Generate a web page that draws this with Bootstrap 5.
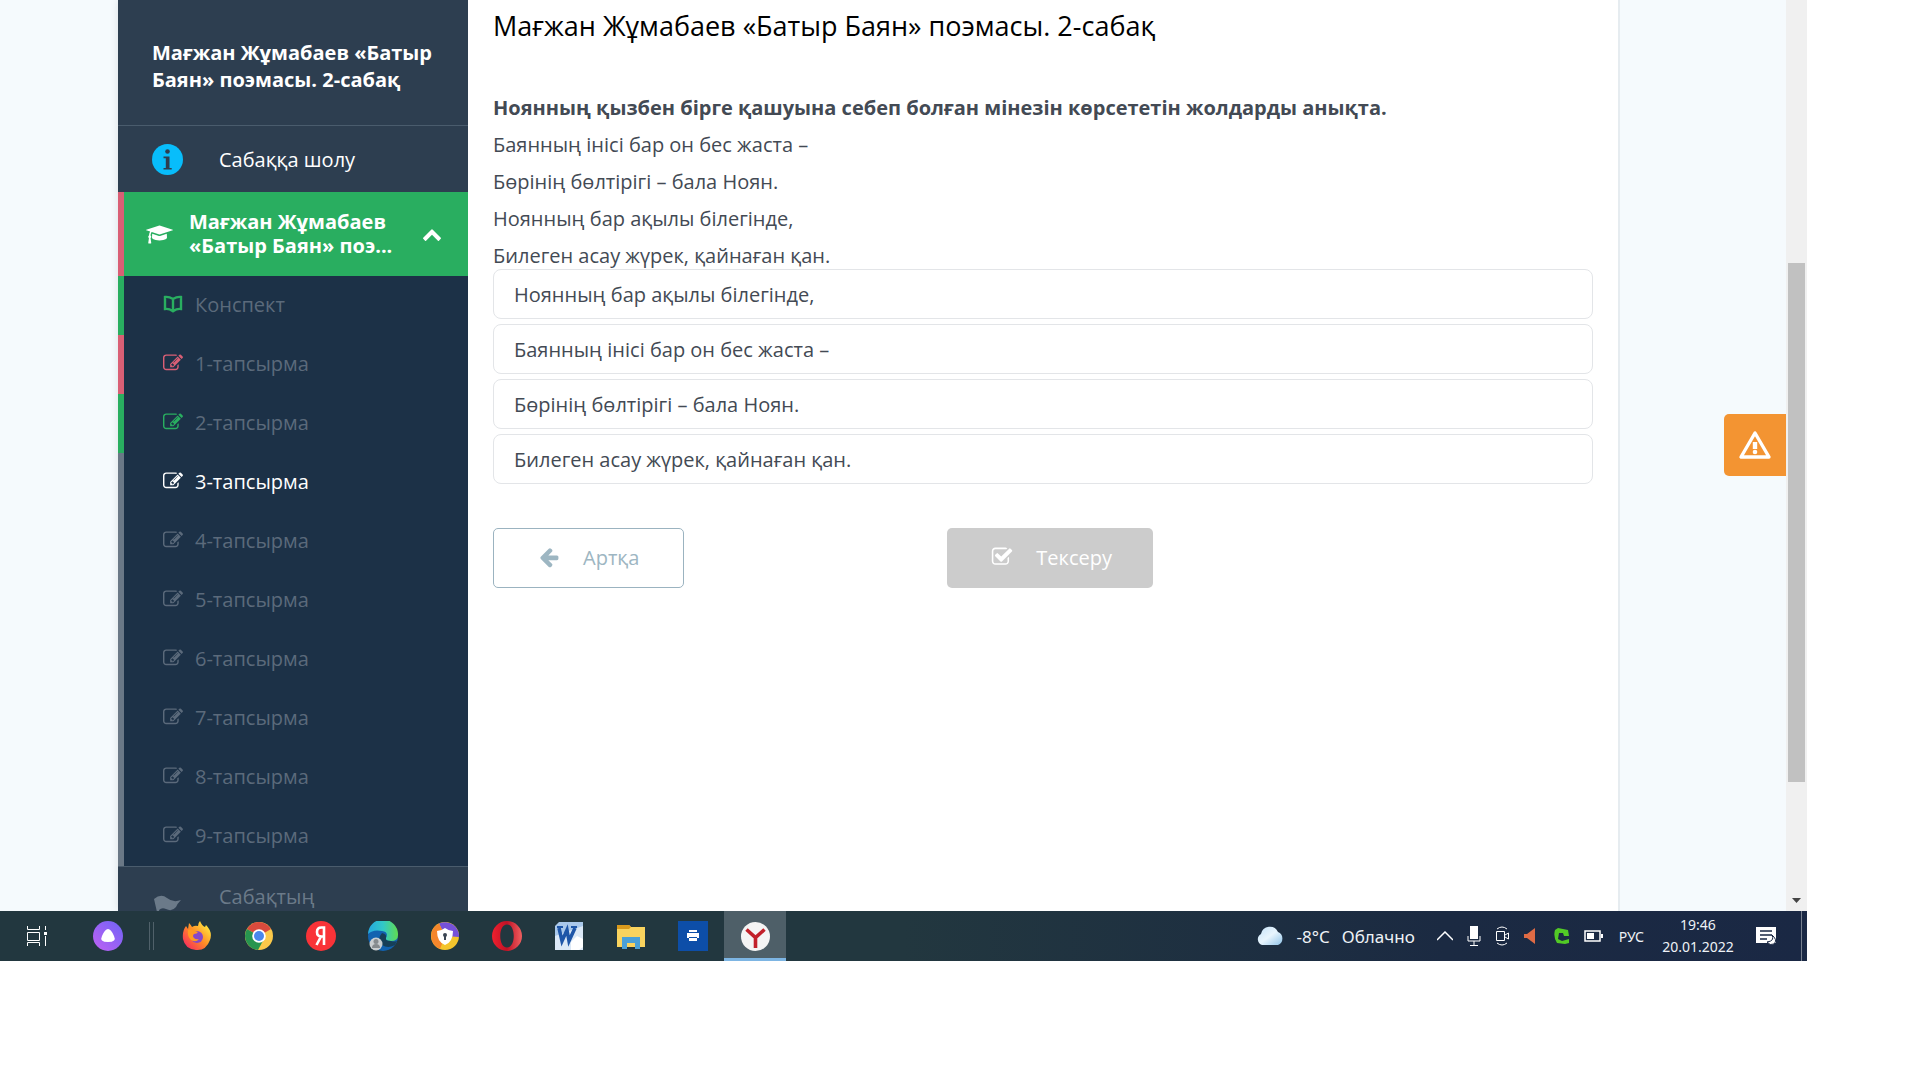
<!DOCTYPE html>
<html lang="kk">
<head>
<meta charset="utf-8">
<meta name="viewport" content="width=device-width, initial-scale=1">
<title>Мағжан Жұмабаев «Батыр Баян» поэмасы. 2-сабақ</title>
<link href="https://cdn.jsdelivr.net/npm/bootstrap@5.3.0/dist/css/bootstrap.min.css" rel="stylesheet">
<style>
:root { --ok: #29ae60; --bad: #d95f75; --idle: #6a7886; --muted: #5b6a7b; }
body { font-family: "Open Sans", "Noto Sans", sans-serif; font-size: 20px; line-height: 27px; color: #434a54; background: #fff; }
a { text-decoration: none; }
button { font: inherit; }
svg { display: block; flex: none; fill: currentColor; }
.desktop { height: calc(100vh - 119px); margin-right: 113px; }
.viewport { background: #f5fafd; min-height: 0; }
.gutter-start { width: 118px; }
.gutter-end { width: 168px; border-left: 2px solid #e6ecf0; }
.lesson-nav { width: 350px; background: #2d3e50; color: #fff; box-shadow: 0 0 8px rgba(0,0,0,.1); }
.lesson-nav a { color: inherit; }
.nav-title { padding: 39px 28px 32px 34px; font-size: 20px; line-height: 27px; }
.nav-line { border-top: 1px solid #4a5c6d; }
.nav-overview { height: 67px; padding-left: 34px; gap: 36px; }
.topic { height: 84px; border: 0; border-left: 6px solid var(--bad); background: var(--ok); color: #fff; line-height: 24px; padding: 0 26px 0 22px; gap: 16px; }
.step-link { height: 59px; padding: 0 0 3px 39px; gap: 12px; border-left: 6px solid var(--idle); background: #1c3147; }
.lesson-nav .step-link { color: var(--muted); }
.step-link.done { border-color: var(--ok); }
.step-link.failed { border-color: var(--bad); }
.done svg { color: var(--ok); }
.failed svg { color: var(--bad); }
.lesson-nav .step-link.current { color: #fff; }
.nav-summary { padding: 16px 0 0 36px; gap: 38px; }
.lesson-nav .nav-summary { color: #6b7a89; }
.summary-label { min-height: 54px; }
.lesson { padding: 8px 25px 0; background: #fff; }
.lesson h1 { font-size: 27px; line-height: 36px; color: #000; margin-bottom: 50px; font-weight: 400; }
.lesson p { margin-bottom: 10px; }
.lesson p:last-of-type { margin-bottom: 0; }
.answers { gap: 5px; margin-bottom: 44px; }
.answer { height: 50px; padding: 0 20px; border: 1px solid #e3e5e8; border-radius: 8px; background: #fff; color: #434a54; }
.act { height: 60px; border-radius: 5px; gap: 23px; padding: 0 44px 2px; }
.act-back { border: 1px solid #9bb3c0; background: #fff; color: #9db6c2; }
.act-check { border: 0; background: #ccc; color: #fff; padding-right: 41px; }
.act-row { gap: 263px; }
.report { top: 414px; right: 0; width: 62px; height: 62px; border: 0; border-radius: 5px 0 0 5px; background: #f39432; color: #fff; }
.scroller { width: 21px; background: #f0f0f0; padding: 263px 2px 8px; }
.scroll-thumb { flex: 0 1 519px; background: #c1c1c1; }
.taskbar { height: 50px; flex: none; background: linear-gradient(90deg, #22373f 0, #22373f 50%, #1b2a42 80%, #1a2844 100%); color: #eef2f6; font-family: "Noto Sans", "Open Sans", sans-serif; }
.taskbar button { border: 0; background: none; color: inherit; padding: 0; height: 50px; display: flex; align-items: center; justify-content: center; }
.tb-app { width: 62px; }
.tb-view { width: 73px; }
.tb-alice { width: 69px; }
.tb-grip { width: 5px; height: 28px; margin: 0 12px 0 7px; border: solid #50616a; border-width: 0 1px; }
.taskbar .tb-active { background: #4e5f68; border-bottom: 3px solid #7db5e3; padding-top: 3px; }
.taskbar .weather { font-size: 17px; gap: 12px; }
.tray { gap: 16px; padding-left: 22px; font-size: 14px; }
.status-icons { gap: 14px; }
.clock { width: 72px; margin-left: 2px; font-size: 14px; line-height: 22px; text-align: center; }
.taskbar .tb-note { margin-left: 6px; }
.tb-edge { width: 6px; margin-left: 9px; border-left: 1px solid #77808f; }
</style>
<script src="https://cdn.jsdelivr.net/npm/bootstrap@5.3.0/dist/js/bootstrap.bundle.min.js"></script>
</head>
<body>
<svg width="0" height="0" class="position-absolute" aria-hidden="true">
  <symbol id="edit" viewBox="0 0 1792 1792"><path d="M888 1184l116-116-152-152-116 116v56h96v96h56zm440-720q-16-16-33 1l-350 350q-17 17-1 33t33-1l350-350q17-17 1-33zm80 594v190q0 119-84.5 203.5t-203.5 84.5h-832q-119 0-203.5-84.5t-84.5-203.5v-832q0-119 84.5-203.5t203.5-84.5h832q63 0 117 25 15 7 18 23 3 17-9 29l-49 49q-14 14-32 8-23-6-45-6h-832q-66 0-113 47t-47 113v832q0 66 47 113t113 47h832q66 0 113-47t47-113v-126q0-13 9-22l64-64q15-15 35-7t20 29zm-96-738l288 288-672 672h-288v-288zm444 132l-92 92-288-288 92-92q28-28 68-28t68 28l152 152q28 28 28 68t-28 68z"/></symbol>
</svg>
<div class="desktop d-flex flex-column">
  <div class="viewport d-flex flex-grow-1 overflow-hidden position-relative">
    <div class="gutter-start flex-shrink-0"></div>
    <nav class="lesson-nav flex-shrink-0">
      <h2 class="nav-title fw-bold mb-0">Мағжан Жұмабаев «Батыр Баян» поэмасы. 2-сабақ</h2>
      <a href="#" class="nav-overview nav-line d-flex align-items-center">
        <svg width="31" height="31" viewBox="0 0 31 31"><circle cx="15.500" cy="15.500" r="15.500" fill="#08bdfb"/><g fill="#2d3e50"><circle cx="15.500" cy="7.500" r="2.300"/><path d="M11.500 12.500h6V24h2.200v1.500h-8.200V24h2.300v-9.800h-2.300z"/></g></svg>
        <span>Сабаққа шолу</span>
      </a>
      <button type="button" class="topic d-flex align-items-center w-100 text-start fw-bold">
        <svg width="27" height="21" viewBox="0 0 2304 1792"><path d="M1774 836l18 316q4 69-82 128t-235 93.500-323 34.500-323-34.500-235-93.500-82-128l18-316 574 181q22 7 48 7t48-7zm530-324q0 23-22 31l-1120 352q-4 1-10 1t-10-1l-652-206q-43 34-71 111.500t-34 178.500q63 36 63 109 0 69-58 107l58 433q2 14-8 25-9 11-24 11h-192q-15 0-24-11-10-11-8-25l58-433q-58-38-58-107 0-73 65-111 11-207 98-330l-333-104q-22-8-22-31t22-31l1120-352q4-1 10-1t10 1l1120 352q22 8 22 31z"/></svg>
        <span class="flex-grow-1">Мағжан Жұмабаев «Батыр Баян» поэ...</span>
        <svg width="20" height="20" viewBox="0 0 1792 1792"><path d="M1683 1331l-166 165q-19 19-45 19t-45-19l-531-531-531 531q-19 19-45 19t-45-19l-166-165q-19-19-19-45.500t19-45.500l742-741q19-19 45-19t45 19l742 741q19 19 19 45.500t-19 45.500z"/></svg>
      </button>
      <a href="#" class="step-link done d-flex align-items-center"><svg width="20" height="18" viewBox="0 0 20 18"><path d="M10 4Q6 1.500 2 2v12q4-.5 8 2.200Q14 13.500 18 14V2q-4-.5-8 2zm0 0v12" fill="none" stroke="currentColor" stroke-width="2.400"/></svg><span>Конспект</span></a>
      <a href="#" class="step-link failed d-flex align-items-center"><svg width="20" height="20"><use href="#edit"/></svg><span>1-тапсырма</span></a>
      <a href="#" class="step-link done d-flex align-items-center"><svg width="20" height="20"><use href="#edit"/></svg><span>2-тапсырма</span></a>
      <a href="#" class="step-link current d-flex align-items-center" aria-current="page"><svg width="20" height="20"><use href="#edit"/></svg><span>3-тапсырма</span></a>
      <a href="#" class="step-link d-flex align-items-center"><svg width="20" height="20"><use href="#edit"/></svg><span>4-тапсырма</span></a>
      <a href="#" class="step-link d-flex align-items-center"><svg width="20" height="20"><use href="#edit"/></svg><span>5-тапсырма</span></a>
      <a href="#" class="step-link d-flex align-items-center"><svg width="20" height="20"><use href="#edit"/></svg><span>6-тапсырма</span></a>
      <a href="#" class="step-link d-flex align-items-center"><svg width="20" height="20"><use href="#edit"/></svg><span>7-тапсырма</span></a>
      <a href="#" class="step-link d-flex align-items-center"><svg width="20" height="20"><use href="#edit"/></svg><span>8-тапсырма</span></a>
      <a href="#" class="step-link d-flex align-items-center"><svg width="20" height="20"><use href="#edit"/></svg><span>9-тапсырма</span></a>
      <a href="#" class="nav-summary nav-line d-flex align-items-center">
        <svg width="27" height="30" viewBox="0 0 27 30"><path d="M0 4Q7-2 13 3t14 2q-4 4-5 7-4 5-10 2-4-2-7 1l3 15H6z"/></svg>
        <span class="summary-label">Сабақтың</span>
      </a>
    </nav>
    <main class="lesson flex-grow-1">
      <h1>Мағжан Жұмабаев «Батыр Баян» поэмасы. 2-сабақ</h1>
      <p class="fw-bold">Ноянның қызбен бірге қашуына себеп болған мінезін көрсететін жолдарды анықта.</p>
      <p>Баянның інісі бар он бес жаста –</p>
      <p>Бөрінің бөлтірігі – бала Ноян.</p>
      <p>Ноянның бар ақылы білегінде,</p>
      <p>Билеген асау жүрек, қайнаған қан.</p>
      <div class="answers d-flex flex-column">
        <button type="button" class="answer text-start">Ноянның бар ақылы білегінде,</button>
        <button type="button" class="answer text-start">Баянның інісі бар он бес жаста –</button>
        <button type="button" class="answer text-start">Бөрінің бөлтірігі – бала Ноян.</button>
        <button type="button" class="answer text-start">Билеген асау жүрек, қайнаған қан.</button>
      </div>
      <div class="act-row d-flex">
        <button type="button" class="act act-back d-flex align-items-center"><svg width="22" height="22" viewBox="0 0 1792 1792"><path d="M1664 896v128q0 53-32.500 90.500t-84.500 37.500h-704l293 294q38 36 38 90t-38 90l-75 76q-37 37-90 37-52 0-91-37l-651-652q-37-37-37-90 0-52 37-91l651-650q38-38 91-38 52 0 90 38l75 74q38 38 38 91t-38 91l-293 293h704q52 0 84.500 37.500t32.500 90.500z"/></svg>Артқа</button>
        <button type="button" class="act act-check d-flex align-items-center"><svg width="22" height="22" viewBox="0 0 1792 1792"><path d="M1472 930v318q0 119-84.500 203.500t-203.500 84.500h-832q-119 0-203.500-84.500t-84.500-203.500v-832q0-119 84.500-203.500t203.500-84.500h832q63 0 117 25 15 7 18 23 3 17-9 29l-49 49q-10 10-23 10-3 0-9-2-23-6-45-6h-832q-66 0-113 47t-47 113v832q0 66 47 113t113 47h832q66 0 113-47t47-113v-254q0-13 9-22l64-64q10-10 23-10 6 0 12 3 20 8 20 29zm231-489l-814 814q-24 24-57 24t-57-24l-430-430q-24-24-24-57t24-57l110-110q24-24 57-24t57 24l263 263 647-647q24-24 57-24t57 24l110 110q24 24 24 57t-24 57z"/></svg>Тексеру</button>
      </div>
    </main>
    <div class="gutter-end flex-shrink-0 position-relative">
      <button type="button" class="report position-absolute d-flex align-items-center justify-content-center p-0" aria-label="Қате туралы хабарлау"><svg width="34" height="30" viewBox="0 0 34 30"><path d="M17 3L3 27h28z" fill="none" stroke="currentColor" stroke-width="3.400" stroke-linejoin="round"/><path d="M14.800 12h4.400v7h-4.400z"/><circle cx="17" cy="22" r="2.300"/></svg></button>
    </div>
    <div class="scroller flex-shrink-0 d-flex flex-column">
      <div class="scroll-thumb"></div>
      <svg class="mt-auto mx-auto" width="9" height="5" viewBox="0 0 9 5"><path d="M0 0h9L4.500 5z" fill="#444"/></svg>
    </div>
  </div>
  <footer class="taskbar d-flex align-items-center">
    <button type="button" class="tb-view" aria-label="Представление задач"><svg width="22" height="20" viewBox="0 0 22 20" stroke="#fff"><path d="M1.500 0v3.500h12V0M1.500 6.500h12v8h-12zM1.500 20v-3.500h12V20M19.500 0v4M19.500 10v10" fill="none"/><path d="M18 6h3v3h-3z" fill="#fff" stroke="none"/></svg></button>
    <button type="button" class="tb-alice" aria-label="Алиса"><svg width="30" height="30" viewBox="0 0 30 30"><defs><linearGradient id="al" x1="0" y1="1" x2="1" y2="0"><stop stop-color="#c061f3"/><stop offset="1" stop-color="#6e63f6"/></linearGradient></defs><circle cx="15" cy="15" r="15" fill="url(#al)"/><path d="M15 8q3 0 6 7 3 6-6 6t-6-6q3-7 6-7z" fill="#fff"/></svg></button>
    <div class="tb-grip"></div>
    <button type="button" class="tb-app" aria-label="Firefox"><svg width="30" height="30" viewBox="0 0 30 30"><defs><linearGradient id="ff" x1="1" y1="0" x2="0" y2="1"><stop offset=".15" stop-color="#ffe13c"/><stop offset=".5" stop-color="#ff8a26"/><stop offset="1" stop-color="#f5146b"/></linearGradient></defs><path d="M18 0q2 5 5 6l1-2q7 7 4 15-4 11-14 10Q3 28 1 18 0 10 4 5l2 3 1-6q2 2 3 4 3-2 6-1 0-3 2-5z" fill="url(#ff)"/><circle cx="15" cy="16" r="6" fill="#8748c7"/><path d="M6 9q4-2 7 1l3 1q-1 2-4 2-2 2 0 4 2 2 5 1-3 4-8 1-4-4-3-10z" fill="#ff9a22"/></svg></button>
    <button type="button" class="tb-app" aria-label="Chrome"><svg width="28" height="28" viewBox="0 0 28 28"><circle cx="14" cy="14" r="14" fill="#fbc94a"/><path d="M14 14L1.900 7a14 14 0 0 1 24.200 0z" fill="#d94a3d"/><path d="M14 14L1.900 7A14 14 0 0 0 13 28l6-11z" fill="#27954f"/><circle cx="14" cy="14" r="6.800" fill="#fff"/><circle cx="14" cy="14" r="5" fill="#4a87ec"/></svg></button>
    <button type="button" class="tb-app" aria-label="Яндекс"><svg width="30" height="30" viewBox="0 0 30 30"><circle cx="15" cy="15" r="15" fill="#f93338"/><path d="M18 24V6.500h-2.500q-4.500 0-4.500 4.500t4.500 4.500H18M15 15.500L10.500 24" fill="none" stroke="#fff" stroke-width="2.600"/></svg></button>
    <button type="button" class="tb-app" aria-label="Edge"><svg width="30" height="30" viewBox="0 0 30 30"><defs><linearGradient id="ed"><stop stop-color="#25a8e0"/><stop offset=".5" stop-color="#32c8c8"/><stop offset="1" stop-color="#60dc50"/></linearGradient></defs><circle cx="15" cy="15" r="15" fill="#1262b0"/><path d="M0 13A15 15 0 0 1 30 14q0 6-7 6-6 0-5-3 3-6-4-7Q5 8 0 13z" fill="url(#ed)"/><path d="M14 12q-6 7 0 12 6 4 13 0l2-4q-3 1-6 0-6 0-5-3 1-4-4-5z" fill="#173f58"/><circle cx="8" cy="23" r="6.500" fill="#c9cdd0"/><circle cx="8" cy="20.500" r="2.500" fill="#858a8e"/><path d="M4 27q0-4 4-4t4 4z" fill="#858a8e"/></svg></button>
    <button type="button" class="tb-app" aria-label="Браузер с защитой"><svg width="28" height="28" viewBox="0 0 28 28"><circle cx="14" cy="14" r="14" fill="#f4c52d"/><path d="M14 14L8 1.500A14 14 0 0 1 28 15z" fill="#7651d9"/><path d="M14 14L8 1.500A14 14 0 0 0 9 27z" fill="#f4862c"/><path d="M14 6q4 3 8 3 0 11-8 14Q6 20 6 9q4 0 8-3z" fill="#fff"/><circle cx="14" cy="13" r="2" fill="#3c4654"/><path d="M13 13h2v5h-2z" fill="#3c4654"/></svg></button>
    <button type="button" class="tb-app" aria-label="Opera"><svg width="30" height="30" viewBox="0 0 30 30"><defs><linearGradient id="op"><stop stop-color="#f0202e"/><stop offset=".5" stop-color="#c01226"/><stop offset="1" stop-color="#f06060"/></linearGradient></defs><path fill-rule="evenodd" d="M15 0a15 15 0 1 1 0 30 15 15 0 0 1 0-30zm0 3.500C6 3.500 6 26.500 15 26.500S24 3.500 15 3.500z" fill="url(#op)"/></svg></button>
    <button type="button" class="tb-app" aria-label="Word"><svg width="28" height="28" viewBox="0 0 28 28"><path d="M4 0h24v28H0V4z" fill="#a9c8ea"/><path d="M0 14L28 4v24H0z" fill="#dbe8f6"/><path d="M4 6l3 13 5-11 2 11 6-13" fill="none" stroke="#1e56a8" stroke-width="3.500"/><path d="M2 5h6M16 5h6" stroke="#1e56a8" stroke-width="2"/><path d="M16 20l6-6 6 3v8l-4 3h-8z" fill="#fff"/></svg></button>
    <button type="button" class="tb-app" aria-label="Проводник"><svg width="28" height="26" viewBox="0 0 28 26"><path d="M0 2h12l2 2h14v20H0z" fill="#f9d35e"/><path d="M0 2h12l2 2-2 2H0z" fill="#d99a1c"/><path d="M5 26V14h18v12h-5v-6h-8v6z" fill="#4aa0d8"/></svg></button>
    <button type="button" class="tb-app" aria-label="Принтер"><svg width="30" height="30" viewBox="0 0 30 30"><path d="M0 0h30v30H0z" fill="#0d4ea8"/><path d="M11 9h8v2h-8zM9 12h12v5h-2v-1h-8v1H9zM11 17h8v3h-8z" fill="#fff"/></svg></button>
    <button type="button" class="tb-app tb-active" aria-label="Яндекс.Браузер"><svg width="29" height="29" viewBox="0 0 29 29"><circle cx="14.500" cy="14.500" r="14.500" fill="#f4f4f4"/><path d="M5.500 7.500l9 8 9-8M14.500 15v11" fill="none" stroke="#c2202a" stroke-width="3.600"/></svg></button>
    <button type="button" class="weather ms-auto"><svg width="28" height="20" viewBox="0 0 28 20"><defs><linearGradient id="cl" x2="1" y2="1"><stop stop-color="#c4e2f8"/><stop offset=".5" stop-color="#e8f5fd"/><stop offset="1" stop-color="#8fc3e8"/></linearGradient></defs><path d="M6 19a6 6 0 0 1-1-11 9 9 0 0 1 17-2 7 7 0 0 1 0 13z" fill="url(#cl)"/></svg><span>-8°C</span><span>Облачно</span></button>
    <div class="tray d-flex align-items-center">
      <div class="status-icons d-flex align-items-center">
      <button type="button" aria-label="Скрытые значки"><svg width="16" height="10" viewBox="0 0 16 10"><path d="M0 9l8-8 8 8" fill="none" stroke="#fff" stroke-width="1.500"/></svg></button>
      <svg width="14" height="22" viewBox="0 0 14 22"><path d="M3 1h8v13H3z" fill="#fff"/><path d="M1 11v5h12v-5M7 16v4M3 20.500h8" fill="none" stroke="#fff"/></svg>
      <svg width="15" height="20" viewBox="0 0 15 20" stroke="#fff"><path d="M1.500 5.500h8v9h-8zM10 9l3.500-2v6L10 11M2 3q5-4 10 0M2 17q5 4 10 0" fill="none"/></svg>
      <svg width="12" height="16" viewBox="0 0 12 16"><path d="M0 6h3l8-6v16l-8-6H0z" fill="#df6b45"/></svg>
      <svg class="ms-1" width="16" height="18" viewBox="0 0 16 18"><path fill-rule="evenodd" d="M1 3l3-2 10 2 1 6-5 0-1-3-4 0-1 6 4 2 7-2v4l-4 1-8-1Q-1 10 1 3z" fill="#52ca26"/></svg>
      <svg width="19" height="12" viewBox="0 0 19 12"><path d="M1 1h15v10H1z" fill="none" stroke="#fff" stroke-width="1.500"/><path d="M3 3h7v6H3zM17 4h2v4h-2z" fill="#fff"/></svg>
      </div>
      <button type="button">РУС</button>
      <div class="clock">19:46<br>20.01.2022</div>
      <button type="button" class="tb-note" aria-label="Уведомления"><svg width="20" height="20" viewBox="0 0 20 20"><path d="M0 1h20v16H5H0z" fill="#fff"/><path d="M4 5h12M4 9h12M4 13h7" stroke="#1a2844" stroke-width="1.300"/><path d="M16 9q3 6-5 7 3 4 7 2 4-4-2-9z" fill="#fff" stroke="#1a2844"/></svg></button>
      <div class="tb-edge align-self-stretch"></div>
    </div>
  </footer>
</div>
</body>
</html>
